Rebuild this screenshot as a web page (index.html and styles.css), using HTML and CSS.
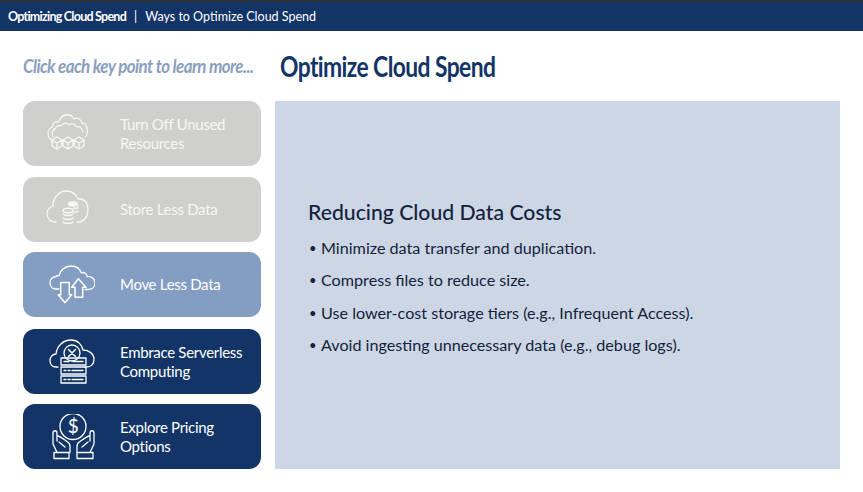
FILE: index.html
```html
<!DOCTYPE html>
<html lang="en">
<head>
    <meta charset="UTF-8">
    <meta name="viewport" content="width=device-width, initial-scale=1.0">
    <title>Optimize Cloud Spend</title>
    <link rel="stylesheet" href="styles.css">
</head>
<body>
    <header class="top-bar">
        <span class="course-name">Optimizing Cloud Spend</span>
        <span class="divider">|</span>
        <span class="lesson-name">Ways to Optimize Cloud Spend</span>
    </header>
    <main class="slide">
        <p class="hint">Click each key point to learn more...</p>
        <h1 class="slide-title">Optimize Cloud Spend</h1>
        <nav class="key-points">
            <button class="key-point visited">
                <svg class="icon" viewBox="0 0 52 46">
                    <g transform="translate(3.2 0) scale(.89 1)">
                        <path d="M7 29c-4-1-5-4-5-7 0-3 2-5 5-6 0-4 4-6 7-5 2-5 6-8 11-7 3 0 5 2 6 4 4-2 8 0 9 4 4 0 6 3 6 6 1 4-1 7-2 8"/>
                        <path d="M8 26c-2-2-2-7 2-8 1-3 4-4 7-3 2-3 6-4 9-1 3-2 7-1 8 2 3-1 7 1 7 5"/>
                    </g>
                    <path d="M14 26l5 3v6l-5 3-5-3v-6zM9 29l5 3 5-3M14 32v6"/>
                    <path d="M25 26l5 3v6l-5 3-5-3v-6zM20 29l5 3 5-3M25 32v6"/>
                    <path d="M36 26l5 3v6l-5 3-5-3v-6zM31 29l5 3 5-3M36 32v6"/>
                </svg>
                <span>Turn Off Unused<br>Resources</span>
            </button>
            <button class="key-point visited">
                <svg class="icon" viewBox="0 0 52 46">
                    <path d="M13 35H12C7 35 4 31 4 27c0-4 3-7 6-8 0-8 6-15 13-15 6 0 10 3 12 8 1 0 2 0 3 0 5 1 7 6 7 11 0 6-4 12-10 12h-1"/>
                    <ellipse cx="30" cy="17" rx="4.5" ry="2" class="solid"/>
                    <path class="thick" d="M20 23.500c0-3 10-3 10 0s-10 3-10 0zM20 27c2 2 8 2 10 0M20 31c2 2 8 2 10 0M20 35c2 2 8 2 10 0"/>
                    <path class="thick" d="M31 21c2 1 4 0 4-1M31 25c2 0 4 0 4-1"/>
                </svg>
                <span>Store Less Data</span>
            </button>
            <button class="key-point current">
                <svg class="icon" viewBox="0 0 52 46">
                    <path d="M16 27h-3c-4 0-6-3-6-6.500 0-3.500 3-6 6-6 1-1 2-1 3-1 1-5 6-9.500 12-9.500 5 0 9 3 10.500 7 1-.5 3-.5 4 .5 1 .5 1.500 2 1.500 3 5-.5 8 3 8 6.500 0 4-3 6.500-7 6.500h-3"/>
                    <path class="thick" d="M17.700 20.500h8.600v12.300h2.400l-6.700 8-6.700-8h2.400zM35.300 16.800l7.700 8.400h-3.300v10h-7.700v-10h-3.300z"/>
                </svg>
                <span>Move Less Data</span>
            </button>
            <button class="key-point">
                <svg class="icon" viewBox="0 0 52 46">
                    <path d="M15 28h-2c-4 0-6-3-6-6.500 0-4 3-6.500 6-6.500 1-8 7-14 15-14 7 0 11 5 12 10 6 0 11 4 11 9 0 5-3 8-8 8h-1"/>
                    <circle cx="29" cy="14" r="8"/>
                    <path class="thick" d="M25.500 10.500l7 7M32.500 10.500l-7 7"/>
                    <path d="M18 19h25v7H18zM18 28h25v7H18zM18 37h25v7H18z"/>
                    <path d="M21 31.500h2M25 31.500h2M29 31.500h11M21 40.500h2M25 40.500h2M29 40.500h11M30 22.500h10M21 22.500h5"/>
                </svg>
                <span>Embrace Serverless<br>Computing</span>
            </button>
            <button class="key-point">
                <svg class="icon" viewBox="0 0 52 46">
                    <circle cx="30" cy="12.500" r="13"/>
                    <text class="dollar" x="30" y="19">$</text>
                    <path d="M14 38.500L11 32c-1-1-1-2-1-3V19c0-3 4-3 4 0v8M14 21.500c4 1 7 4 10 6 2 1 3 3 3 5v6M16 28l6 5"/>
                    <path d="M11 38.500h15v6H11z"/>
                    <path d="M47 38.500L50 32c1-1 1-2 1-3V19c0-3-4-3-4 0v8M47 21.500c-4 1-7 4-10 6-2 1-3 3-3 5v6M45 28l-6 5"/>
                    <path d="M34 38.500h16v6H34z"/>
                </svg>
                <span>Explore Pricing<br>Options</span>
            </button>
        </nav>
        <section class="panel">
            <h2>Reducing Cloud Data Costs</h2>
            <ul>
                <li>Minimize data transfer and duplication.</li>
                <li>Compress files to reduce size.</li>
                <li>Use lower-cost storage tiers (e.g., Infrequent Access).</li>
                <li>Avoid ingesting unnecessary data (e.g., debug logs).</li>
            </ul>
        </section>
    </main>
</body>
</html>
```

FILE: styles.css
```css
body {
    margin: 0;
    height: 492px;
    overflow: hidden;
    background: #fff;
    font-family: 'Lato', sans-serif;
}

.top-bar {
    display: flex;
    align-items: center;
    height: 29px;
    padding-left: 8px;
    background: #133467;
    border-top: 2px solid #2e3138;
    color: #fff;
    font-size: 12.500px;
}

.course-name {
    width: 118px;
    font-weight: 700;
    letter-spacing: -0.75px;
    white-space: nowrap;
}

.divider {
    margin: 0 8px;
}

.slide {
    display: grid;
    grid-template-columns: 238px 565px;
    grid-template-rows: 70px 368px;
    column-gap: 14px;
    padding-left: 23px;
}

.hint {
    margin: 0;
    align-self: center;
    color: #8a9ec0;
    font-size: 18px;
    font-style: italic;
    font-weight: 700;
    letter-spacing: -0.6px;
    white-space: nowrap;
    transform: scaleX(0.938);
    transform-origin: left;
}

.slide-title {
    margin: 0 0 0 5px;
    align-self: center;
    color: #133467;
    font-size: 28px;
    font-weight: 700;
    letter-spacing: -0.7px;
    white-space: nowrap;
    transform: scaleX(0.815);
    transform-origin: left;
}

.key-points {
    display: flex;
    flex-direction: column;
    gap: 10px;
}

.key-point {
    display: flex;
    align-items: center;
    gap: 25px;
    height: 65px;
    padding: 0 0 0 20px;
    border: none;
    border-radius: 12px;
    background: #133467;
    color: #fff;
    font-family: inherit;
    font-size: 15px;
    letter-spacing: -0.3px;
    line-height: 18.500px;
    text-align: left;
}

.key-point:nth-child(2) {
    margin-top: 1px;
}

.key-point:nth-child(4) {
    margin-top: 2px;
}

.key-point.visited {
    background: #cfcfcd;
    color: #f7f7f6;
}

.key-point.current {
    background: #849dc2;
}

.icon {
    flex: none;
    width: 52px;
    height: 46px;
    fill: none;
    stroke: currentColor;
    stroke-width: 1.300;
    stroke-linejoin: round;
    stroke-linecap: round;
}

.icon .thick {
    stroke-width: 1.500;
}

.icon .solid {
    fill: currentColor;
}

.icon .dollar {
    fill: currentColor;
    stroke: none;
    font-size: 19px;
    text-anchor: middle;
}

.panel {
    display: flex;
    flex-direction: column;
    justify-content: center;
    padding: 0 33px;
    background: #cdd6e5;
    color: #14233c;
}

.panel h2 {
    margin: 0 0 7px;
    font-size: 21.200px;
    font-weight: 500;
}

.panel ul {
    margin: 0 0 10px;
    padding: 0;
    list-style: none;
}

.panel li {
    position: relative;
    padding-left: 13px;
    font-size: 16.150px;
    line-height: 32.500px;
}

.panel li::before {
    content: "•";
    position: absolute;
    left: 1px;
    font-size: 13px;
}
```
